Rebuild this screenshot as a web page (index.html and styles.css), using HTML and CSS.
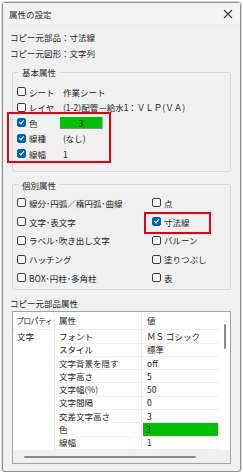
FILE: index.html
```html
<!DOCTYPE html>
<html lang="ja">
<head>
<meta charset="UTF-8">
<meta name="viewport" content="width=device-width, initial-scale=1.0">
<title>属性の設定</title>
<link rel="stylesheet" href="styles.css">
</head>
<body>
<div class="window">
    <div class="titlebar">
        <span class="title">属性の設定</span>
        <svg class="close" width="10" height="10" viewBox="0 0 10 10">
            <path d="M1 1 L9 9 M9 1 L1 9" stroke="#3a3a3a" stroke-width="1.1" fill="none"/>
        </svg>
    </div>
    <div class="content">
        <p class="info">コピー元部品：寸法線</p>
        <p class="info">コピー元図形：文字列</p>

        <fieldset class="group basic">
            <legend>基本属性</legend>
            <div class="attr-row">
                <label class="check"><span class="box"></span>シート</label>
                <span class="value">作業シート</span>
            </div>
            <div class="attr-row">
                <label class="check"><span class="box"></span>レイヤ</label>
                <span class="value">(1-2)配管－給水1：ＶＬＰ(ＶＡ)</span>
            </div>
            <div class="attr-row">
                <label class="check"><span class="box checked"></span>色</label>
                <span class="value"><span class="swatch">3</span></span>
            </div>
            <div class="attr-row">
                <label class="check"><span class="box checked"></span>線種</label>
                <span class="value">(なし)</span>
            </div>
            <div class="attr-row">
                <label class="check"><span class="box checked"></span>線幅</label>
                <span class="value">1</span>
            </div>
        </fieldset>

        <fieldset class="group kinds">
            <legend>個別属性</legend>
            <div class="kind-grid">
                <label class="check"><span class="box"></span>線分･円弧／楕円弧･曲線</label>
                <label class="check"><span class="box"></span>点</label>
                <label class="check"><span class="box"></span>文字･表文字</label>
                <label class="check"><span class="box checked"></span>寸法線</label>
                <label class="check"><span class="box"></span>ラベル･吹き出し文字</label>
                <label class="check"><span class="box"></span>バルーン</label>
                <label class="check"><span class="box"></span>ハッチング</label>
                <label class="check"><span class="box"></span>塗りつぶし</label>
                <label class="check"><span class="box"></span>BOX･円柱･多角柱</label>
                <label class="check"><span class="box"></span>表</label>
            </div>
        </fieldset>

        <p class="section-label">コピー元部品属性</p>
        <div class="prop-table">
            <div class="prop-main">
                <div class="prop-grid">
                    <div class="cell head narrow">プロパティ</div>
                    <div class="cell head">属性</div>
                    <div class="cell head">値</div>

                    <div class="cell group-col">文字</div>
                    <div class="cell">フォント</div>
                    <div class="cell">ＭＳ ゴシック</div>

                    <div class="cell group-col"></div>
                    <div class="cell">スタイル</div>
                    <div class="cell">標準</div>

                    <div class="cell group-col"></div>
                    <div class="cell">文字背景を隠す</div>
                    <div class="cell">off</div>

                    <div class="cell group-col"></div>
                    <div class="cell">文字高さ</div>
                    <div class="cell">5</div>

                    <div class="cell group-col"></div>
                    <div class="cell">文字幅(%)</div>
                    <div class="cell">50</div>

                    <div class="cell group-col"></div>
                    <div class="cell">文字間隔</div>
                    <div class="cell">0</div>

                    <div class="cell group-col"></div>
                    <div class="cell">交差文字高さ</div>
                    <div class="cell">3</div>

                    <div class="cell group-col"></div>
                    <div class="cell">色</div>
                    <div class="cell green">3</div>

                    <div class="cell group-col"></div>
                    <div class="cell">線幅</div>
                    <div class="cell">1</div>
                </div>
                <div class="vscroll"><div class="vthumb"></div></div>
            </div>
            <div class="hscroll"><div class="hthumb"></div></div>
        </div>
    </div>

    <!-- annotation frames drawn over the dialog -->
    <div class="mark mark-basic"></div>
    <div class="mark mark-kind"></div>
</div>
</body>
</html>
```

FILE: styles.css
```css
body {
    margin: 0;
    background-color: #ffffff;
    font-family: "Noto Sans CJK JP", "Noto Sans", sans-serif;
    font-size: 8.5px;
    color: #1b1b1b;
}
.window {
    position: relative;
    margin: 2px 2px 0 2px;
    height: 470px;
    border: 1px solid #8e8e8e;
    border-radius: 3px;
    background-color: #f0f0f0;
    box-shadow: 0 0 0 1px #dadada;
    box-sizing: border-box;
}
.titlebar {
    display: flex;
    align-items: center;
    justify-content: space-between;
    height: 21px;
    padding: 0 7px 0 6px;
    background-color: #f3f3f3;
    border-bottom: 1px solid #ececec;
}
.title {
    color: #2a2a2a;
}
.close {
    display: block;
}
.content {
    padding: 4px 7px 0 7px;
}
.info {
    margin: 0;
    height: 16px;
    line-height: 16px;
}
.group {
    margin: 4px 2px 0 2px;
    padding: 5px 4px 9px 4px;
    border: 1px solid #d9d9d9;
    border-radius: 2px;
    min-width: 0;
}
.group legend {
    margin-left: 2px;
    padding: 0 3px;
    line-height: 14px;
    color: #2a2a2a;
}
.attr-row {
    display: grid;
    grid-template-columns: 46px auto;
    align-items: center;
    height: 15.5px;
}
.check {
    display: flex;
    align-items: center;
    gap: 3px;
    white-space: nowrap;
}
.box {
    display: inline-block;
    width: 9px;
    height: 9px;
    border: 1px solid #3c3c3c;
    border-radius: 2px;
    background-color: #fbfbfb;
    box-sizing: border-box;
    position: relative;
}
.box.checked {
    border-color: #0063b8;
    background-color: #0063b8;
}
.box.checked::after {
    content: "";
    position: absolute;
    left: 2px;
    top: 0px;
    width: 2px;
    height: 4px;
    border-right: 1px solid #ffffff;
    border-bottom: 1px solid #ffffff;
    transform: rotate(40deg);
}
.value {
    white-space: nowrap;
}
.swatch {
    display: block;
    margin-left: -3px;
    width: 43px;
    height: 12px;
    line-height: 12px;
    text-align: center;
    background-color: #00c000;
    border-bottom: 1px solid #8a8a8a;
    border-right: 1px solid #b0b0b0;
    box-sizing: border-box;
}
.kinds {
    margin-top: 6px;
    padding: 2px 4px 2px 4px;
}
.kind-grid {
    display: grid;
    grid-template-columns: 135px auto;
    grid-auto-rows: 18.75px;
    align-items: center;
}
.section-label {
    margin: 6px 0 0 0;
    height: 14px;
    line-height: 14px;
}
.prop-table {
    margin: 1px 2px 0 2px;
    border: 1px solid #a3a3a3;
    background-color: #ffffff;
}
.prop-main {
    display: flex;
}
.prop-grid {
    display: grid;
    grid-template-columns: 42px 87px 76px;
    grid-template-rows: 18px repeat(9, 13.3px);
}
.cell {
    padding-left: 4px;
    line-height: 13px;
    white-space: nowrap;
    overflow: hidden;
    border-right: 1px solid #ececec;
    border-bottom: 1px solid #efefef;
    display: flex;
    align-items: center;
}
.cell:nth-child(3n) {
    padding-left: 5px;
    border-right: none;
}
.cell.head {
    color: #2a2a2a;
}
.cell.narrow {
    padding-left: 3px;
    font-size: 8px;
    letter-spacing: -0.7px;
    overflow: visible;
}
.cell.group-col {
    border-bottom: none;
}
.cell.green {
    padding-left: 3px;
    margin-left: 1px;
    background-color: #00c000;
}
.vscroll {
    flex: 1;
    padding: 12px 0 0 6px;
}
.vthumb {
    width: 2px;
    height: 25px;
    border-radius: 1px;
    background-color: #8a8a8a;
}
.hscroll {
    height: 13px;
    padding: 6px 0 0 11px;
    background-color: #f0f0f0;
    box-sizing: border-box;
}
.hthumb {
    width: 172px;
    height: 2px;
    border-radius: 1px;
    background-color: #8a8a8a;
}
.mark {
    position: absolute;
    border: 2px solid #e60012;
    box-sizing: border-box;
}
.mark-basic {
    left: 4px;
    top: 109px;
    width: 104px;
    height: 51px;
}
.mark-kind {
    left: 141px;
    top: 209px;
    width: 67px;
    height: 22px;
}
```
